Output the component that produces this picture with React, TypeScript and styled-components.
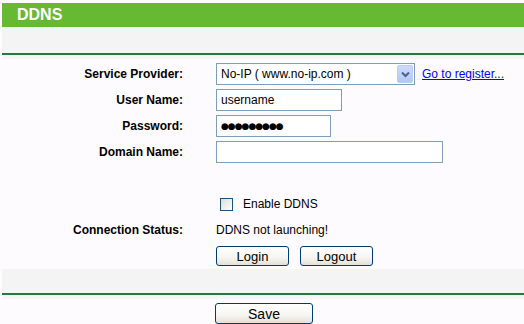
import React from "react";
import styled, { createGlobalStyle } from "styled-components";

const Global = createGlobalStyle`
  html, body { margin: 0; padding: 0; background: #fefbfe; }
  body { font-family: "Liberation Sans", Arial, sans-serif; font-size: 12px; color: #000; }
`;

const Page = styled.div`
  padding: 3px 0 0 2px;
  width: 522px;
`;

const Header = styled.div`
  height: 24px;
  background: #66b933;
  color: #fff;
  font-weight: bold;
  font-size: 16px;
  display: flex;
  align-items: center;
  padding-left: 15px;
`;

const Band = styled.div<{ $h: number }>`
  height: ${(p) => p.$h}px;
  background: #f4f4f4;
`;

const Rule = styled.div`
  height: 2px;
  background: #237a3e;
`;

const Strip = styled.div`
  height: 4px;
  background: #f5f5f5;
`;

const Form = styled.div`
  display: grid;
  grid-template-columns: 181px 1fr;
  column-gap: 33px;
  grid-auto-rows: 26px;
  padding: 2px 0 0;
`;

const Label = styled.div`
  font-weight: bold;
  text-align: right;
  display: flex;
  align-items: center;
  justify-content: flex-end;
`;

const Value = styled.div<{ $gap?: number }>`
  display: flex;
  align-items: center;
  gap: ${(p) => p.$gap ?? 0}px;
`;

const SelectBox = styled.div`
  box-sizing: border-box;
  width: 199px;
  height: 22px;
  border: 1px solid #7f9db9;
  background: #fff;
  display: flex;
  align-items: center;
  justify-content: space-between;
  padding: 0 0 0 4px;
`;

const DropBtn = styled.div`
  box-sizing: border-box;
  width: 16px;
  height: 18px;
  margin-right: 1px;
  border: 1px solid #b9cdf9;
  border-radius: 2px;
  background: linear-gradient(#cddcfd, #b3c7f5);
  display: flex;
  align-items: center;
  justify-content: center;
`;

const Link = styled.a`
  color: #0000ff;
  text-decoration: underline;
  margin-left: 7px;
`;

const TextBox = styled.input<{ $w: number }>`
  box-sizing: border-box;
  width: ${(p) => p.$w}px;
  height: 22px;
  border: 1px solid #7f9db9;
  background: #fff;
  font-family: "Liberation Sans", Arial, sans-serif;
  font-size: 12px;
  padding: 0 4px;
  margin: 0;
  outline: none;
  color: #000;
`;

const DotBox = styled(TextBox)`
  font-family: "DejaVu Sans", sans-serif;
  font-size: 9px;
  letter-spacing: -1px;
`;

const Check = styled.span`
  box-sizing: border-box;
  width: 13px;
  height: 13px;
  border: 1px solid #1c5180;
  background: linear-gradient(135deg, #dcdcd7, #fff);
  margin-left: 4px;
  margin-right: 10px;
`;

const Btn = styled.button<{ $w: number; $fs: number; $h: number }>`
  box-sizing: border-box;
  width: ${(p) => p.$w}px;
  height: ${(p) => p.$h}px;
  border: 1px solid #003c74;
  border-radius: 3px;
  background: linear-gradient(#ffffff 0%, #f6f5f1 60%, #e3e0d6 100%);
  font-family: "Liberation Sans", Arial, sans-serif;
  font-size: ${(p) => p.$fs}px;
  color: #000;
  padding: 0;
  margin: 0;
`;

const Footer = styled.div`
  display: flex;
  padding: 4px 0 0 213px;
`;

export default function App() {
  return (
    <>
      <Global />
      <Page>
        <Header>DDNS</Header>
        <Band $h={26} />
        <Rule />
        <Strip />
        <Form>
          <Label>Service Provider:</Label>
          <Value>
            <SelectBox>
              <span>No-IP ( www.no-ip.com )</span>
              <DropBtn>
                <svg width="9" height="7" viewBox="0 0 9 7">
                  <path d="M1 1.5 L4.5 5 L8 1.5" fill="none" stroke="#4d6185" strokeWidth="2" />
                </svg>
              </DropBtn>
            </SelectBox>
            <Link href="#">Go to register...</Link>
          </Value>
          <Label>User Name:</Label>
          <Value>
            <TextBox $w={126} defaultValue="username" />
          </Value>
          <Label>Password:</Label>
          <Value>
            <DotBox $w={115} defaultValue="●●●●●●●●●" />
          </Value>
          <Label>Domain Name:</Label>
          <Value>
            <TextBox $w={227} defaultValue="" />
          </Value>
          <Label />
          <Value />
          <Label />
          <Value>
            <Check />
            <span>Enable DDNS</span>
          </Value>
          <Label>Connection Status:</Label>
          <Value>DDNS not launching!</Value>
          <Label />
          <Value $gap={11}>
            <Btn $w={73} $h={20} $fs={13}>Login</Btn>
            <Btn $w={73} $h={20} $fs={13}>Logout</Btn>
          </Value>
        </Form>
        <Band $h={24} />
        <Rule />
        <Strip />
        <Footer>
          <Btn $w={98} $h={21} $fs={14}>Save</Btn>
        </Footer>
      </Page>
    </>
  );
}
